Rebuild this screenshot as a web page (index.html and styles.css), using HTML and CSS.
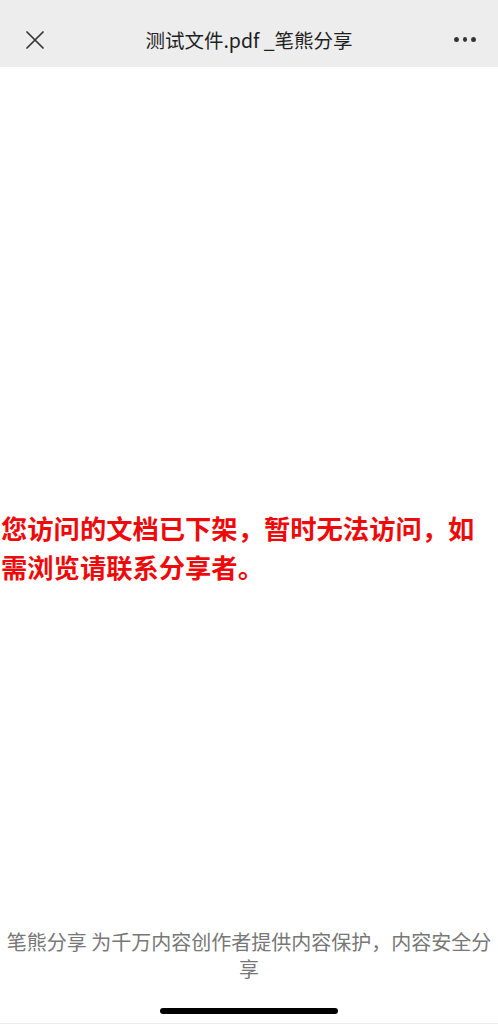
FILE: index.html
```html
<!DOCTYPE html>
<html lang="zh-CN">
<head>
<meta charset="utf-8">
<title>测试文件.pdf _笔熊分享</title>
<link rel="stylesheet" href="styles.css">
</head>
<body>
<div class="page">
  <header class="nav">
    <span class="nav-btn close">
      <svg width="20" height="20" viewBox="0 0 20 20"><path d="M2 2 L18 18 M18 2 L2 18" stroke="#333" stroke-width="1.7" fill="none" stroke-linecap="round"/></svg>
    </span>
    <span class="nav-title">测试文件.pdf _笔熊分享</span>
    <span class="nav-btn more"><i></i><i></i><i></i></span>
  </header>
  <main class="content">
    <p class="notice">您访问的文档已下架，暂时无法访问，如需浏览请联系分享者。</p>
  </main>
  <footer class="footer">笔熊分享 为千万内容创作者提供内容保护，内容安全分享</footer>
  <div class="home"><span class="home-bar"></span></div>
</div>
</body>
</html>
```
FILE: styles.css
```css
* { box-sizing: border-box; }
html, body { margin: 0; padding: 0; background: #fff; }
body { font-family: "Noto Sans CJK SC", "Noto Sans", sans-serif; }
.page { width: 498px; height: 1024px; display: flex; flex-direction: column; overflow: hidden; }
.nav { height: 67px; flex: none; background: #ededed; display: flex; align-items: center; justify-content: space-between; padding: 12px 22px 0 24px; }
.nav-btn { width: 22px; display: flex; align-items: center; justify-content: center; }
.close svg { display: block; }
.more { gap: 4px; width: 22px; }
.more i { width: 5px; height: 5px; border-radius: 50%; background: #333; display: block; }
.nav-title { font-size: 19.5px; color: #1f1f1f; line-height: 26px; margin-right: 2px; }
.content { height: 861px; flex: none; padding-top: 441px; }
.notice { margin: 0; width: 484px; font-size: 26.3px; line-height: 39px; font-weight: 700; color: #ee0a0a; padding-left: 1px; }
.footer { flex: none; height: 54px; padding: 0 6px; text-align: center; font-size: 20px; line-height: 27px; color: #777; }
.home { flex: 1; display: flex; justify-content: center; padding-top: 26px; border-bottom: 1px solid #eee; }
.home-bar { width: 178px; height: 6px; border-radius: 3px; background: #000; }
```
